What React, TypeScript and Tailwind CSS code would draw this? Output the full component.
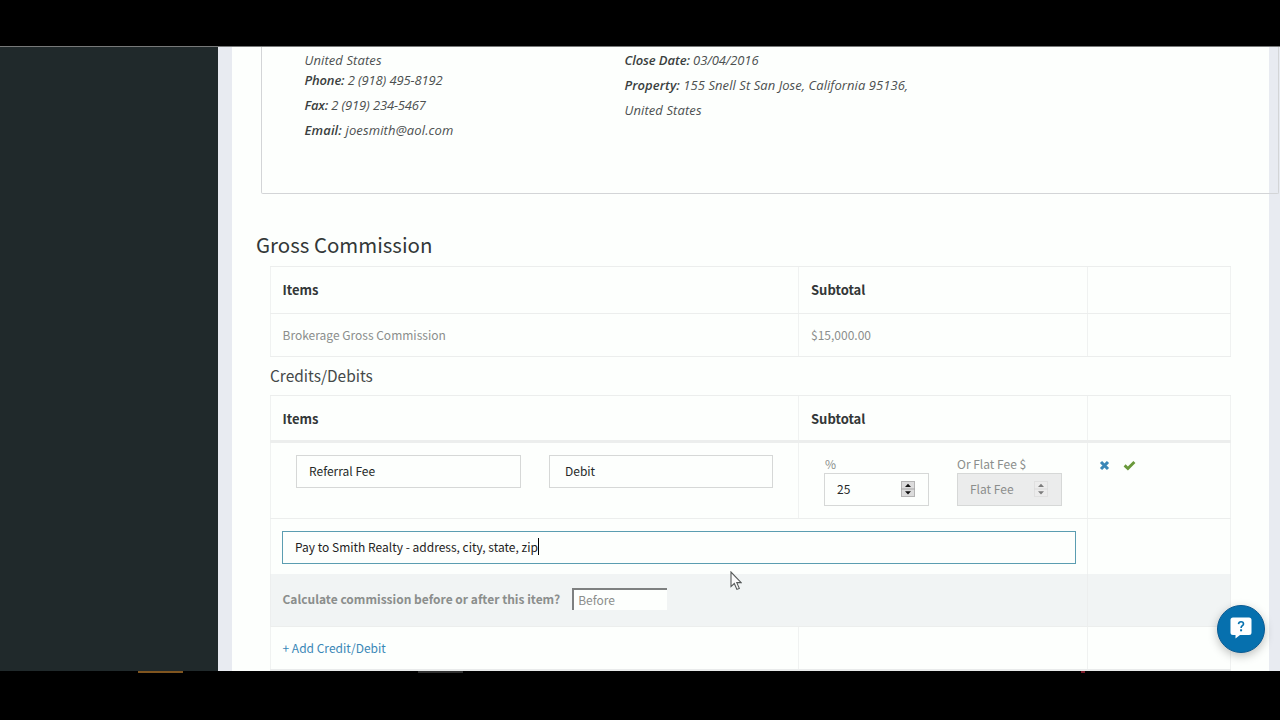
import type { ReactNode } from "react";

function Field({ label, children, className = "" }: { label: string; children: ReactNode; className?: string }) {
  return (
    <p className={"whitespace-nowrap " + className}>
      <span className="font-semibold text-[#3b3f3f]">{label}</span> {children}
    </p>
  );
}

function HeaderRow() {
  return (
    <>
      <div className="flex-1 border-l border-[#f0f2f1] pl-[11.5px]">Items</div>
      <div className="w-[289px] border-l border-[#f0f2f1] pl-[12px]">Subtotal</div>
      <div className="w-[144px] border-x border-[#f0f2f1]" />
    </>
  );
}

function Spinner({ disabled = false }: { disabled?: boolean }) {
  return (
    <svg width="14" height="16" viewBox="0 0 14 16" className="shrink-0">
      <rect x="0.5" y="0.5" width="13" height="15" fill={disabled ? "#ececec" : "#dcdcdc"} stroke={disabled ? "#e0e0e0" : "#b4b4b4"} />
      <path d="M0 8h14" stroke={disabled ? "#dadada" : "#a4a4a4"} />
      <path d="M4 6 7 2.8 10 6zM4 10.2h6L7 13.4z" fill={disabled ? "#7c7c7c" : "#111111"} />
    </svg>
  );
}

export default function App() {
  return (
    <div className="relative flex h-[720px] w-[1280px] flex-col overflow-hidden bg-black font-['Noto_Sans_CJK_SC',sans-serif] text-[12px] leading-5 text-[#8b8e8c]">
      <div className="h-[46px] shrink-0" />
      <div className="flex h-[625px] shrink-0 border-t border-[#777979] bg-[#e8ebf1]">
        <aside className="w-[218px] shrink-0 bg-[#20292b]" />
        <main className="ml-[14px] h-full w-[1037px] shrink-0 bg-[#fdfffd]">
          <section className="ml-[29px] flex h-[147px] w-[1018px] rounded-b-[2px] border-x border-b border-[#d3d5d7] pl-[42.5px] font-['Open_Sans',sans-serif] text-[13px] leading-[25px] text-[#4c5050] italic">
            <div className="w-[320px] pt-[3px]">
              <p className="leading-5 tracking-[0.1px]">United States</p>
              <Field label="Phone:" className="leading-5 tracking-[-0.14px]">2 (918) 495-8192</Field>
              <Field label="Fax:" className="pt-[3px] tracking-[-0.15px]">2 (919) 234-5467</Field>
              <Field label="Email:" className="tracking-[0.14px]">joesmith@aol.com</Field>
            </div>
            <div className="pt-[1px]">
              <Field label="Close Date:" className="tracking-[-0.1px]">03/04/2016</Field>
              <Field label="Property:" className="tracking-[0.06px]">155 Snell St San Jose, California 95136,</Field>
              <p className="tracking-[0.1px]">United States</p>
            </div>
          </section>

          <h2 className="mt-[34px] ml-[24px] h-[38px] text-[20.45px] leading-8 text-[#333838]">Gross Commission</h2>

          <div className="ml-[38px] w-[961px]">
            <div className="flex h-[47px] border-t border-[#eceeed] text-[13px] leading-[45px] font-bold text-[#333737]">
              <HeaderRow />
            </div>
            <div className="flex h-[44px] border-y border-[#eceeed] leading-[41px]">
              <div className="flex-1 border-l border-[#f0f2f1] pl-[11.5px]">Brokerage Gross Commission</div>
              <div className="w-[289px] border-l border-[#f0f2f1] pl-[12px]">$15,000.00</div>
              <div className="w-[144px] border-x border-[#f0f2f1]" />
            </div>
            <h3 className="h-[38px] text-[15.45px] leading-[37px] text-[#454949]">Credits/Debits</h3>

            <div className="flex h-[48px] border-t border-b-[3px] border-[#eceeed] text-[13px] leading-[45px] font-bold text-[#333737]">
              <HeaderRow />
            </div>
            <div className="flex h-[75px] text-[#262a2a]">
              <div className="flex flex-1 gap-[28px] border-l border-[#f0f2f1] pt-[12px] pl-[25px]">
                <div className="h-[33px] w-[225px] border border-[#d6d8d7] pl-[12px] leading-[30px]">Referral Fee</div>
                <div className="h-[33px] w-[224px] border border-[#d6d8d7] pl-[15px] leading-[30px]">Debit</div>
              </div>
              <div className="flex w-[289px] gap-[28px] border-l border-[#f0f2f1] pt-[11px] pl-[25px]">
                <div className="w-[105px]">
                  <div className="h-[19px] pl-[1px] text-[#8b8e8c]">%</div>
                  <div className="flex h-[33px] items-center justify-between border border-[#d6d8d7] pr-[13px] pb-[1px] pl-[12px] leading-[30px]">
                    25
                    <Spinner />
                  </div>
                </div>
                <div className="w-[105px] text-[#8b8e8c]">
                  <div className="h-[19px] whitespace-nowrap">Or Flat Fee $</div>
                  <div className="flex h-[33px] items-center justify-between border border-[#d6d8d7] bg-[#ebecec] pr-[13px] pb-[1px] pl-[12px] leading-[30px]">
                    Flat Fee
                    <Spinner disabled />
                  </div>
                </div>
              </div>
              <div className="flex w-[144px] gap-[13px] border-x border-[#f0f2f1] pt-[17px] pl-[11px]">
                <svg width="11" height="11" viewBox="0 0 11 11">
                  <path d="M2 2 9 9M9 2 2 9" stroke="#3a87b7" strokeWidth="3.1" />
                </svg>
                <svg width="13" height="11" viewBox="0 0 13 11">
                  <path d="M1.6 5.4 4.9 8.5 11.4 2" fill="none" stroke="#69993a" strokeWidth="2.9" />
                </svg>
              </div>
            </div>
            <div className="flex h-[56px] border-t border-[#eceeed]">
              <div className="flex-1 border-l border-[#f0f2f1] pt-[12px] pl-[11px]">
                <div className="flex h-[33px] w-[794px] items-center border border-[#5b9db1] pb-[2px] pl-[12px] leading-[29px] text-[#1e2222]">
                  Pay to Smith Realty - address, city, state, zip
                  <span className="h-[17px] w-px bg-black" />
                </div>
              </div>
              <div className="w-[144px] border-x border-[#f0f2f1]" />
            </div>
            <div className="flex h-[52px] bg-[#f1f4f4]">
              <div className="flex flex-1 items-center gap-[12px] border-l border-[#eceeee] pb-[2px] pl-[11.5px] font-bold">
                Calculate commission before or after this item?
                <div className="h-[22px] w-[95px] border-t-2 border-l-2 border-[#7e8080] bg-[#fdfffd] pl-[4px] leading-[19px] font-normal">Before</div>
              </div>
              <div className="w-[144px] border-x border-[#eceeee]" />
            </div>
            <div className="flex h-[43px] border-t border-[#eceeed] leading-[41px] text-[#3a87b7]">
              <div className="flex-1 border-l border-[#f0f2f1] pl-[11.5px]">+ Add Credit/Debit</div>
              <div className="w-[289px] border-l border-[#f0f2f1]" />
              <div className="w-[144px] border-x border-[#f0f2f1]" />
            </div>
            <div className="h-[2px] bg-[#e9ebeb]" />
          </div>
        </main>
      </div>
      <div className="flex h-[49px] shrink-0">
        <div className="ml-[138px] h-[2px] w-[45px] bg-[#80551f]" />
        <div className="ml-[235px] h-[2px] w-[45px] bg-[#303030]" />
        <div className="ml-[618px] h-[2px] w-[4px] bg-[#7c1c2a]" />
      </div>

      <svg className="absolute top-[571px] left-[730px]" width="12" height="20" viewBox="0 0 12 20">
        <path d="M1 1v14.6l3.3-3.1 2.6 5.9 2.4-1-2.5-5.8h4.4z" fill="#fafafa" stroke="#555858" strokeWidth="1.1" />
      </svg>

      <button className="absolute top-[605px] left-[1217px] flex size-[48px] items-center justify-center rounded-full border border-[#0b5b93] bg-[#0670ae] shadow-[0_3px_10px_rgba(0,0,0,0.25)]">
        <svg width="22" height="22" viewBox="0 0 22 22" className="mb-[2px]">
          <path d="M3 0.5h16a2.5 2.5 0 0 1 2.5 2.5v12.5a2.5 2.5 0 0 1-2.5 2.5H10l-4.5 3.5V18H3a2.5 2.5 0 0 1-2.5-2.5V3A2.5 2.5 0 0 1 3 0.5z" fill="#ffffff" />
          <path d="M8.5 7.1c.2-1.6 1.2-2.3 2.5-2.3 1.5 0 2.5.8 2.5 2.1 0 1.8-2.4 1.9-2.4 4" fill="none" stroke="#0670ae" strokeWidth="1.6" />
          <path d="M10.1 12.3h2v2h-2z" fill="#0670ae" />
        </svg>
      </button>
    </div>
  );
}
